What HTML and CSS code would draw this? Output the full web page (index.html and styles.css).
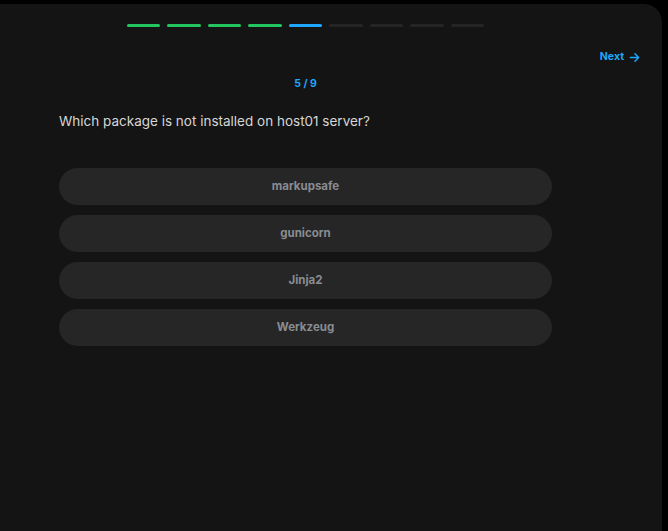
FILE: index.html
```html
<!DOCTYPE html>
<html>
<head>
<meta charset="utf-8">
<link rel="stylesheet" href="styles.css">
</head>
<body>
<div class="card">
  <div class="progress">
    <span class="seg done"></span>
    <span class="seg done"></span>
    <span class="seg done"></span>
    <span class="seg done"></span>
    <span class="seg current"></span>
    <span class="seg"></span>
    <span class="seg"></span>
    <span class="seg"></span>
    <span class="seg"></span>
  </div>
  <div class="toolbar">
    <a class="next">Next
      <svg width="11" height="11" viewBox="0 0 12 12" fill="none" stroke="currentColor" stroke-width="1.6" stroke-linecap="round" stroke-linejoin="round"><path d="M1.5 6h9M6.5 2l4 4-4 4"/></svg>
    </a>
  </div>
  <div class="column">
    <div class="counter">5 / 9</div>
    <div class="question">Which package is not installed on host01 server?</div>
    <div class="options">
      <button class="option">markupsafe</button>
      <button class="option">gunicorn</button>
      <button class="option">Jinja2</button>
      <button class="option">Werkzeug</button>
    </div>
  </div>
</div>
</body>
</html>
```
FILE: styles.css
```css
html, body {
  margin: 0;
  padding: 0;
  background: #000;
  height: 531px;
  overflow: hidden;
  font-family: Inter, "Noto Sans", sans-serif;
}
.card {
  margin-top: 4px;
  width: 662px;
  height: 527px;
  background: #141414;
  border-top-right-radius: 18px;
  box-sizing: border-box;
  padding-top: 20px;
}
.progress {
  display: flex;
  gap: 7px;
  width: 493px;
  margin-left: 59px;
  justify-content: center;
}
.seg {
  width: 33.5px;
  height: 3px;
  border-radius: 2px;
  background: #242424;
}
.seg.done { background: #22c55e; }
.seg.current { background: #1ea7fd; }
.toolbar {
  display: flex;
  justify-content: flex-end;
  padding-right: 22px;
  margin-top: 22px;
  height: 16px;
}
.next {
  display: flex;
  align-items: center;
  gap: 5px;
  color: #1ea7fd;
  font-size: 10.5px;
  font-weight: 700;
  line-height: 16px;
}
.column {
  width: 493px;
  margin-left: 59px;
}
.counter {
  margin-top: 11px;
  text-align: center;
  color: #1ea7fd;
  font-size: 10.5px;
  font-weight: 700;
  line-height: 16px;
}
.question {
  margin-top: 19px;
  color: #d6d6d6;
  font-size: 13.5px;
  line-height: 20px;
}
.options {
  margin-top: 37px;
  display: flex;
  flex-direction: column;
  gap: 10.5px;
}
.option {
  height: 36.5px;
  border: none;
  border-radius: 19px;
  background: #262626;
  color: #898c92;
  font-family: Inter, "Noto Sans", sans-serif;
  font-size: 11.5px;
  font-weight: 700;
  padding: 0;
}
```
